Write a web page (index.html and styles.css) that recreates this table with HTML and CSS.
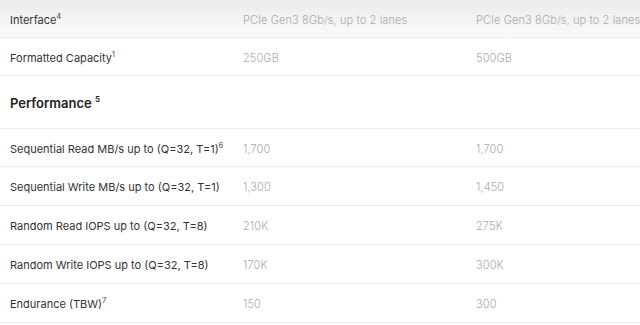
FILE: index.html
```html
<!DOCTYPE html>
<html>
<head>
<meta charset="utf-8">
<link rel="stylesheet" href="styles.css">
</head>
<body>
<div class="specs">
  <div class="row row-top">
    <div class="label">Interface<sup>4</sup></div>
    <div class="val">PCIe Gen3 8Gb/s, up to 2 lanes</div>
    <div class="val">PCIe Gen3 8Gb/s, up to 2 lanes</div>
  </div>
  <div class="row row-short">
    <div class="label">Formatted Capacity<sup>1</sup></div>
    <div class="val">250GB</div>
    <div class="val">500GB</div>
  </div>
  <div class="row row-head">
    <div class="heading">Performance <sup>5</sup></div>
  </div>
  <div class="row row-short">
    <div class="label">Sequential Read MB/s up to (Q=32, T=1)<sup>6</sup></div>
    <div class="val">1,700</div>
    <div class="val">1,700</div>
  </div>
  <div class="row">
    <div class="label">Sequential Write MB/s up to (Q=32, T=1)</div>
    <div class="val">1,300</div>
    <div class="val">1,450</div>
  </div>
  <div class="row">
    <div class="label">Random Read IOPS up to (Q=32, T=8)</div>
    <div class="val">210K</div>
    <div class="val">275K</div>
  </div>
  <div class="row">
    <div class="label">Random Write IOPS up to (Q=32, T=8)</div>
    <div class="val">170K</div>
    <div class="val">300K</div>
  </div>
  <div class="row">
    <div class="label">Endurance (TBW)<sup>7</sup></div>
    <div class="val">150</div>
    <div class="val">300</div>
  </div>
</div>
</body>
</html>
```

FILE: styles.css
```css
html, body {
  margin: 0;
  padding: 0;
  background: #ffffff;
  overflow: hidden;
}
body {
  font-family: Inter, "Open Sans", sans-serif;
  font-size: 11px;
  color: #333333;
}
.specs {
  width: 640px;
}
.row {
  display: grid;
  grid-template-columns: 233px 233px 1fr;
  align-items: center;
  height: 38px;
  border-bottom: 1px solid #eeeeee;
  box-sizing: content-box;
  white-space: nowrap;
}
.row-top {
  height: 37px;
  background: linear-gradient(#ececec, #fafafa);
}
.row-short {
  height: 37px;
}
.row-head {
  height: 52px;
  display: flex;
}
.label, .val, .heading {
  padding-left: 10px;
  padding-top: 2px;
}
.label {
  color: #333333;
}
.val {
  color: #aaaaaa;
  font-weight: 300;
  letter-spacing: 0.1px;
}
.heading {
  font-size: 13px;
  font-weight: 600;
  color: #222222;
  padding-top: 1px;
}
sup {
  font-size: 7px;
  line-height: 0;
  vertical-align: 5px;
}
.heading sup {
  font-size: 8px;
  vertical-align: 6px;
}
```
